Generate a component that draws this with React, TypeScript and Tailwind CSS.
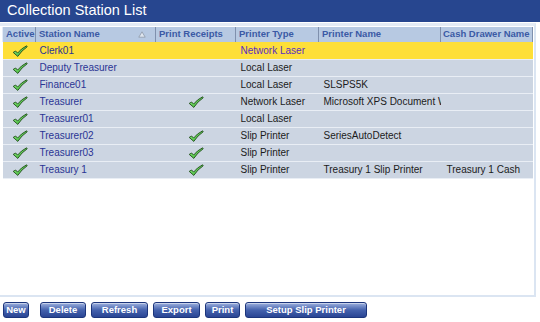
import React from 'react';

type Station = {
    name: string;
    active: boolean;
    receipts: boolean;
    type: string;
    printer: string;
    drawer: string;
};

const stations: Station[] = [
    { name: 'Clerk01', active: true, receipts: false, type: 'Network Laser', printer: '', drawer: '' },
    { name: 'Deputy Treasurer', active: true, receipts: false, type: 'Local Laser', printer: '', drawer: '' },
    { name: 'Finance01', active: true, receipts: false, type: 'Local Laser', printer: 'SLSPS5K', drawer: '' },
    { name: 'Treasurer', active: true, receipts: true, type: 'Network Laser', printer: 'Microsoft XPS Document W', drawer: '' },
    { name: 'Treasurer01', active: true, receipts: false, type: 'Local Laser', printer: '', drawer: '' },
    { name: 'Treasurer02', active: true, receipts: true, type: 'Slip Printer', printer: 'SeriesAutoDetect', drawer: '' },
    { name: 'Treasurer03', active: true, receipts: true, type: 'Slip Printer', printer: '', drawer: '' },
    { name: 'Treasury 1', active: true, receipts: true, type: 'Slip Printer', printer: 'Treasury 1 Slip Printer', drawer: 'Treasury 1 Cash' },
];

const buttons = [
    { label: 'New', w: 'w-[26px]' },
    { label: 'Delete', w: 'w-[46px] ml-[6px]' },
    { label: 'Refresh', w: 'w-[57px]' },
    { label: 'Export', w: 'w-[47px]' },
    { label: 'Print', w: 'w-[35px]' },
    { label: 'Setup Slip Printer', w: 'w-[122px]' },
];

function Check() {
    return (
        <svg width="16" height="12" viewBox="0 0 16 12" className="inline-block">
            <defs>
                <linearGradient id="chk" x1="0" y1="0" x2="1" y2="1">
                    <stop offset="0" stopColor="#9af08a" />
                    <stop offset="1" stopColor="#2fae2a" />
                </linearGradient>
            </defs>
            <path
                d="M1.2 7.4 L3.6 6 L5.6 8.1 Q9 3.6 14.6 0.8 L15.2 1.8 Q9.6 5.4 5.8 11.4 Z"
                fill="url(#chk)"
                stroke="#1f4d1a"
                strokeWidth="0.9"
                strokeLinejoin="round"
            />
        </svg>
    );
}

function HeaderCell({ children, className = '' }: { children?: React.ReactNode; className?: string }) {
    return (
        <th
            className={`h-[15px] p-0 px-[3px] text-left text-[9.5px] font-bold text-[#3b5aa5] whitespace-nowrap overflow-hidden border-l border-l-[#e3ebf6] border-r border-r-[#7f90ad] ${className}`}
        >
            {children}
        </th>
    );
}

export default function App() {
    return (
        <div className="w-[540px] h-[322px] bg-white overflow-hidden" style={{ fontFamily: '"Liberation Sans", Arial, sans-serif' }}>
            {/* Title */}
            <div className="h-[22px] bg-[#27468f] flex items-center pl-[7px] text-white text-[14.5px]">
                Collection Station List
            </div>

            {/* Grid panel */}
            <div className="mt-[1px] w-[536px] h-[274px] border-t-[3px] border-t-[#e4ebf5] border-r-2 border-r-[#dbe5f2] border-b-2 border-b-[#dbe5f2] pl-[2px] pt-[1px]">
                <table className="table-fixed border-collapse w-[530px] text-[10px]">
                    <colgroup>
                        <col className="w-[33px]" />
                        <col className="w-[120px]" />
                        <col className="w-[80px]" />
                        <col className="w-[83px]" />
                        <col className="w-[122px]" />
                        <col className="w-[92px]" />
                    </colgroup>
                    <thead>
                        <tr className="bg-[#b7c9e2]">
                            <HeaderCell className="px-[2px]">Active</HeaderCell>
                            <HeaderCell>
                                <div className="flex items-center justify-between">
                                    <span>Station Name</span>
                                    <svg width="8" height="7" viewBox="0 0 8 7" className="mr-[6px]">
                                        <path d="M4 0.8 L7.2 6.2 L0.8 6.2 Z" fill="#dfe6ef" stroke="#8e99aa" strokeWidth="0.8" />
                                    </svg>
                                </div>
                            </HeaderCell>
                            <HeaderCell className="text-center">Print Receipts</HeaderCell>
                            <HeaderCell>Printer Type</HeaderCell>
                            <HeaderCell>Printer Name</HeaderCell>
                            <HeaderCell className="pl-[2px]">Cash Drawer Name</HeaderCell>
                        </tr>
                    </thead>
                    <tbody>
                        {stations.map((s, i) => {
                            const selected = i === 0;
                            return (
                                <tr
                                    key={s.name}
                                    className={`h-[17px] border-b border-b-[#e9eef5] ${selected ? 'bg-[#fedf38]' : 'bg-[#ccd5e2]'}`}
                                >
                                    <td className="p-0 pl-[2px] text-center align-middle">{s.active && <Check />}</td>
                                    <td className="p-0 pl-[4px] text-[#2a3494] whitespace-nowrap overflow-hidden">{s.name}</td>
                                    <td className="p-0 text-center align-middle">{s.receipts && <Check />}</td>
                                    <td className={`p-0 pl-[5px] whitespace-nowrap overflow-hidden ${selected ? 'text-[#5a2fc0]' : 'text-[#1b1b1b]'}`}>
                                        {s.type}
                                    </td>
                                    <td className="p-0 pl-[5px] text-[#1b1b1b] whitespace-nowrap overflow-hidden">{s.printer}</td>
                                    <td className="p-0 pl-[6px] text-[#1b1b1b] whitespace-nowrap overflow-hidden">{s.drawer}</td>
                                </tr>
                            );
                        })}
                    </tbody>
                </table>
            </div>

            {/* Buttons */}
            <div className="flex gap-[5px] pl-[3px] mt-[5px]">
                {buttons.map((b) => (
                    <button
                        key={b.label}
                        className={`${b.w} h-[16px] rounded-[3px] border border-[#1c357c] bg-gradient-to-b from-[#9fb1de] via-[#4562ad] to-[#2a4594] text-white font-bold text-[9.5px] leading-none flex items-center justify-center whitespace-nowrap shadow-[inset_0_1px_0_rgba(255,255,255,0.45)]`}
                    >
                        {b.label}
                    </button>
                ))}
            </div>
        </div>
    );
}
